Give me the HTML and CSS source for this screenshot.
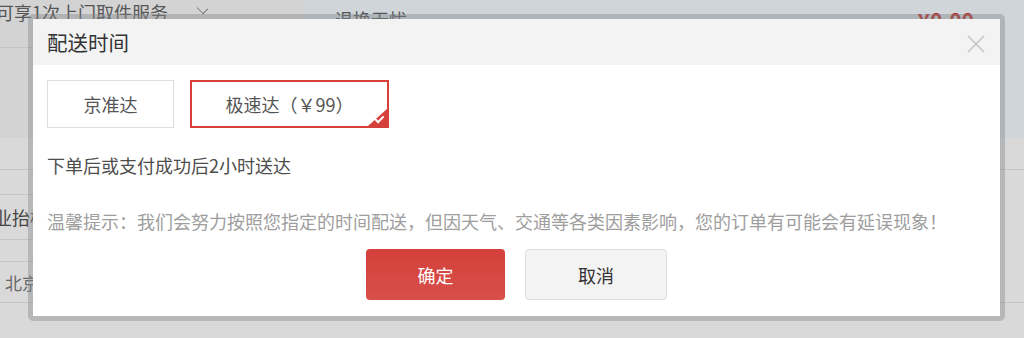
FILE: index.html
```html
<!DOCTYPE html>
<html lang="zh-CN">

<head>
  <meta charset="UTF-8">
  <meta name="viewport" content="width=device-width, initial-scale=1.0">
  <title>配送时间</title>
  <link rel="stylesheet" href="styles.css">
</head>

<body>
  <div class="page">
    <!-- 背景页面（被遮罩） -->
    <div class="top">
      <div class="top-left">
        <div class="service-row">
          <span class="service-text">可享1次上门取件服务</span>
          <span class="chevron"></span>
        </div>
      </div>
      <div class="top-right">
        <span class="return-text">退换无忧</span>
        <span class="price">¥0.00</span>
      </div>
    </div>
    <div class="lower">
      <div class="row row-a"></div>
      <div class="row row-b"><div class="row-line"></div></div>
      <div class="row row-c"><div class="row-line"><span class="floor-text">专业抬楼</span></div></div>
      <div class="row row-d"><div class="row-line"></div></div>
      <div class="row row-e"><span class="city-text">北京市</span></div>
    </div>

    <!-- 配送时间弹窗 -->
    <div class="modal">
      <div class="modal-inner">
        <div class="modal-header">
          <h2>配送时间</h2>
          <span class="close-btn">
            <svg width="18" height="18" viewBox="0 0 18 18">
              <path d="M1 1 L17 17 M17 1 L1 17" stroke="#c4c4c4" stroke-width="1.6" fill="none" />
            </svg>
          </span>
        </div>
        <div class="modal-body">
          <div class="ship-options">
            <div class="ship-option">京准达</div>
            <div class="ship-option selected">极速达（￥99）</div>
          </div>
          <p class="ship-desc">下单后或支付成功后2小时送达</p>
          <p class="ship-tip">温馨提示：我们会努力按照您指定的时间配送，但因天气、交通等各类因素影响，您的订单有可能会有延误现象！</p>
          <div class="modal-actions">
            <button class="btn btn-primary">确定</button>
            <button class="btn btn-default">取消</button>
          </div>
        </div>
      </div>
    </div>
  </div>
</body>

</html>
```

FILE: styles.css
```css
* {
  margin: 0;
  padding: 0;
  box-sizing: border-box;
  font-family: "Noto Sans CJK SC", "Liberation Sans", sans-serif;
}

body {
  width: 1024px;
  height: 338px;
  overflow: hidden;
  background-color: #d9d9d9;
}

.page {
  position: relative;
  width: 1024px;
  height: 338px;
}

/* 背景页面 */
.top {
  display: flex;
  height: 138px;
}

.top-left {
  width: 305px;
  background-color: #d3d3d3;
}

.service-row {
  height: 48px;
  border-bottom: 1px solid #c4c4c4;
  display: flex;
  align-items: flex-start;
  padding-top: 2px;
}

.service-text {
  margin-left: -4px;
  font-size: 18px;
  line-height: 20px;
  color: #555;
}

.chevron {
  width: 9px;
  height: 9px;
  margin: 2px 0 0 30px;
  border-right: 1.5px solid #777;
  border-bottom: 1.5px solid #777;
  transform: rotate(45deg) scaleY(0.8);
}

.top-right {
  flex: 1;
  display: flex;
  justify-content: space-between;
  align-items: flex-start;
  padding: 8px 50px 0 30px;
  background-color: #cfd5d9;
}

.return-text {
  font-size: 18px;
  line-height: 22px;
  color: #555;
}

.price {
  font-size: 21px;
  line-height: 24px;
  font-weight: 700;
  color: #b5302b;
}

.row {
  border-bottom: 1px solid #c4c4c4;
}

.row-a {
  height: 32px;
}

.row-b,
.row-c,
.row-d {
  border-bottom: none;
}

.row-line {
  width: 60%;
  border-bottom: 1px solid #c4c4c4;
}

.row-b .row-line {
  height: 25px;
}

.row-c .row-line {
  height: 45px;
  display: flex;
  align-items: center;
}

.row-d .row-line {
  height: 22px;
}

.floor-text {
  margin-left: -24px;
  font-size: 18px;
  color: #444;
}

.row-e {
  height: 41px;
  display: flex;
  align-items: center;
}

.city-text {
  margin-left: 5px;
  font-size: 17px;
  color: #666;
}

/* 弹窗 */
.modal {
  position: absolute;
  top: 14px;
  left: 28px;
  width: 977px;
  height: 307px;
  border-radius: 5px;
  border: 5px solid rgba(130, 135, 140, 0.42);
}

.modal-inner {
  height: 100%;
  background-color: white;
}

.modal-header {
  position: relative;
  height: 46px;
  padding-left: 14px;
  display: flex;
  align-items: center;
  background-color: #f3f3f3;
}

.modal-header h2 {
  font-size: 20.5px;
  font-weight: 400;
  color: #333;
}

.close-btn {
  position: absolute;
  top: 16px;
  right: 15px;
  width: 18px;
  height: 18px;
  cursor: pointer;
}

.close-btn svg {
  display: block;
}

.modal-body {
  padding: 15px 14px 16px;
}

.ship-options {
  display: flex;
  gap: 16px;
}

.ship-option {
  position: relative;
  width: 127px;
  height: 48px;
  border: 1px solid #dedede;
  display: flex;
  align-items: center;
  justify-content: center;
  font-size: 18px;
  color: #555;
  cursor: pointer;
}

.ship-option.selected {
  width: 199px;
  border: 2px solid #d6403b;
}

/* 选中角标 */
.ship-option.selected::after {
  content: "";
  position: absolute;
  right: 0;
  bottom: 0;
  width: 0;
  height: 0;
  border-left: 19px solid transparent;
  border-bottom: 17px solid #d6403b;
}

.ship-option.selected::before {
  content: "";
  position: absolute;
  right: 3px;
  bottom: 5px;
  width: 7px;
  height: 3px;
  border-left: 2px solid white;
  border-bottom: 2px solid white;
  transform: rotate(-45deg);
  z-index: 1;
}

.ship-desc {
  margin-top: 25px;
  font-size: 18px;
  line-height: 24px;
  color: #4d4d4d;
}

.ship-tip {
  margin-top: 32px;
  font-size: 18px;
  line-height: 24px;
  color: #9e9e9e;
}

.modal-actions {
  display: flex;
  justify-content: center;
  gap: 20px;
  margin-top: 16px;
}

.btn {
  height: 51px;
  border-radius: 4px;
  font-size: 18px;
  cursor: pointer;
}

.btn-primary {
  width: 139px;
  border: none;
  background: linear-gradient(#d4403b, #d84f4a);
  color: white;
}

.btn-default {
  width: 142px;
  border: 1px solid #dcdcdc;
  background-color: #f3f3f3;
  color: #333;
}
```
